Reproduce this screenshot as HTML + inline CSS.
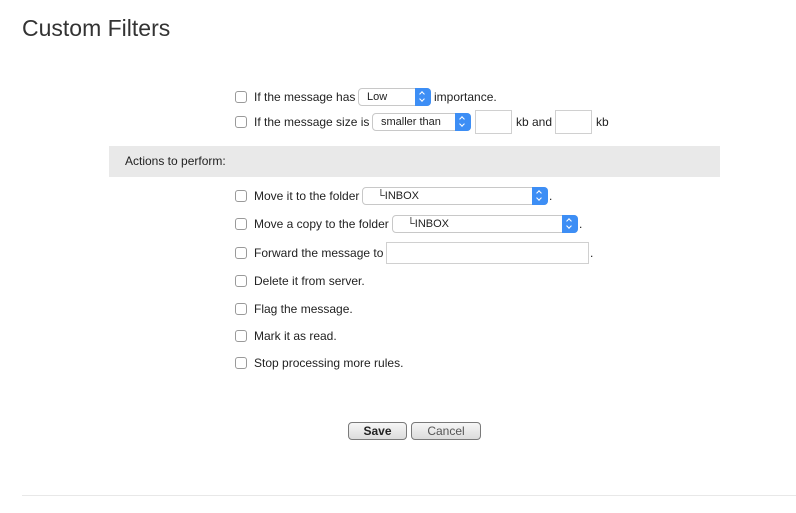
<!DOCTYPE html>
<html><head><meta charset="utf-8"><style>
*{margin:0;padding:0;box-sizing:border-box}
body{width:796px;height:513px;background:#fff;position:relative;font-family:"Liberation Sans",sans-serif;font-size:12px;color:#222;overflow:hidden}
.a{position:absolute;white-space:nowrap}
.t{line-height:14px}
.cb{position:absolute;width:12px;height:12px;border:1px solid #9a9a9a;border-radius:3px;background:#fff}
.sel{position:absolute;height:18px;border:1px solid #c8c8c8;border-radius:4px;background:#fff;font-size:11px;line-height:17px;padding-left:8px}
.sel .ar{position:absolute;right:-1px;top:-1px;width:16px;height:18px;background:#3d8ef5;border-radius:0 4px 4px 0}
.sel .ar:before{content:"";position:absolute;left:5px;top:4px;width:3px;height:3px;border-left:1.3px solid #fff;border-top:1.3px solid #fff;transform:rotate(45deg)}
.sel .ar:after{content:"";position:absolute;left:5px;top:9px;width:3px;height:3px;border-right:1.3px solid #fff;border-bottom:1.3px solid #fff;transform:rotate(45deg)}
.inp{position:absolute;border:1px solid #d0d0d0;background:#fff}
.btn{position:absolute;height:18px;border:1px solid #7a7a7a;border-radius:4px;background:linear-gradient(#f6f6f6,#dcdcdc);text-align:center;line-height:16px;font-size:12px}
</style></head><body>
<div class="a" style="left:22px;top:14px;font-size:23px;color:#333;line-height:28px">Custom Filters</div>

<div class="cb" style="left:235px;top:91px"></div>
<div class="a t" style="left:254px;top:90px">If the message has</div>
<div class="sel" style="left:358px;top:88px;width:73px">Low<span class="ar"></span></div>
<div class="a t" style="left:434px;top:90px">importance.</div>

<div class="cb" style="left:235px;top:116px"></div>
<div class="a t" style="left:254px;top:115px">If the message size is</div>
<div class="sel" style="left:372px;top:113px;width:99px">smaller than<span class="ar"></span></div>
<div class="inp" style="left:475px;top:110px;width:37px;height:24px"></div>
<div class="a t" style="left:516px;top:115px">kb and</div>
<div class="inp" style="left:555px;top:110px;width:37px;height:24px"></div>
<div class="a t" style="left:596px;top:115px">kb</div>

<div class="a" style="left:109px;top:146px;width:611px;height:31px;background:#e9e9e9"></div>
<div class="a t" style="left:125px;top:154px">Actions to perform:</div>

<div class="cb" style="left:235px;top:190px"></div>
<div class="a t" style="left:254px;top:189px">Move it to the folder</div>
<div class="sel" style="left:362px;top:187px;width:186px;padding-left:14px">└INBOX<span class="ar"></span></div>
<div class="a t" style="left:549px;top:189px">.</div>

<div class="cb" style="left:235px;top:218px"></div>
<div class="a t" style="left:254px;top:217px">Move a copy to the folder</div>
<div class="sel" style="left:392px;top:215px;width:186px;padding-left:14px">└INBOX<span class="ar"></span></div>
<div class="a t" style="left:579px;top:217px">.</div>

<div class="cb" style="left:235px;top:247px"></div>
<div class="a t" style="left:254px;top:246px">Forward the message to</div>
<div class="inp" style="left:386px;top:242px;width:203px;height:22px"></div>
<div class="a t" style="left:590px;top:246px">.</div>

<div class="cb" style="left:235px;top:275px"></div>
<div class="a t" style="left:254px;top:274px">Delete it from server.</div>
<div class="cb" style="left:235px;top:303px"></div>
<div class="a t" style="left:254px;top:302px">Flag the message.</div>
<div class="cb" style="left:235px;top:330px"></div>
<div class="a t" style="left:254px;top:329px">Mark it as read.</div>
<div class="cb" style="left:235px;top:357px"></div>
<div class="a t" style="left:254px;top:356px">Stop processing more rules.</div>

<div class="btn" style="left:348px;top:422px;width:59px;font-weight:bold">Save</div>
<div class="btn" style="left:411px;top:422px;width:70px;color:#555">Cancel</div>

<div class="a" style="left:22px;top:495px;width:774px;height:1px;background:#e8e8e8"></div>
</body></html>
